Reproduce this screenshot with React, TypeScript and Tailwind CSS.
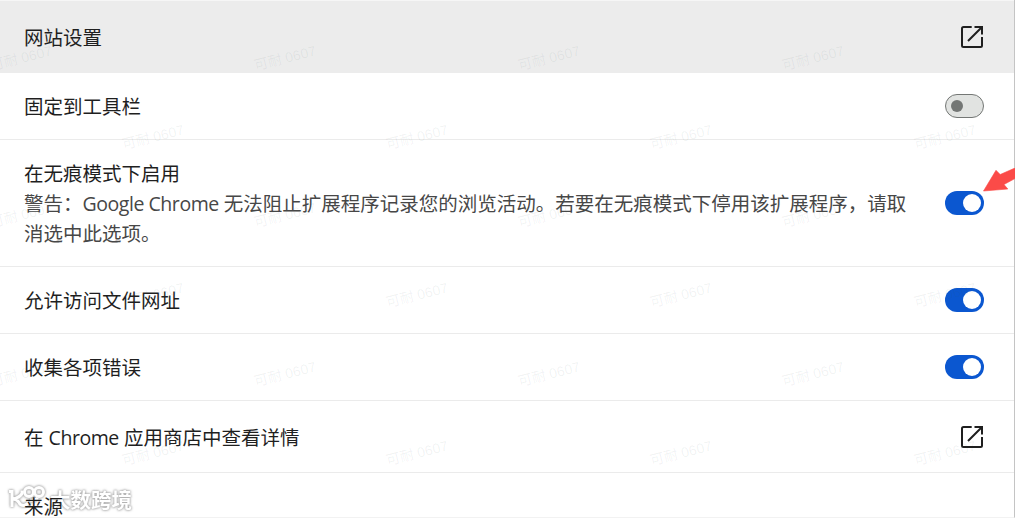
import type React from "react";

const WATERMARK_ROWS = [
  { y: 58, xs: [21, 285, 549, 813] },
  { y: 137, xs: [153, 417, 681, 945] },
  { y: 215, xs: [21, 285, 549, 813] },
  { y: 295, xs: [153, 417, 681, 945] },
  { y: 374, xs: [21, 285, 549, 813] },
  { y: 453, xs: [153, 417, 681, 945] },
];

export default function App() {
  return (
    <div className="relative h-[518px] w-[1015px] overflow-hidden bg-white font-['Open_Sans','Noto_Sans_CJK_SC',sans-serif] text-[19.5px] leading-[30px] text-[#1f1f1f]">
      <Brand />
      <div className="relative flex h-[518px] flex-col overflow-hidden border-r border-b border-r-[#c4c4c4] border-b-[#f2f2f2]">
        <div className="flex h-[73px] shrink-0 items-center justify-between border-t border-[#f6f6f6] bg-[#ececec] pl-6 pr-[31px]">
          <p className="pt-[2px]">网站设置</p>
          <OpenIcon />
        </div>
        <Row className="h-[67px] pr-[30px]" label="固定到工具栏">
          <Toggle on={false} />
        </Row>
        <Row
          className="h-[127px] pr-[30px]"
          label="在无痕模式下启用"
          detail={
            <>
              警告：<Latin>Google Chrome</Latin> 无法阻止扩展程序记录您的浏览活动。若要在无痕模式下停用该扩展程序，请取消选中此选项。
            </>
          }
        >
          <Toggle on />
        </Row>
        <Row className="h-[67px] pr-[30px]" label="允许访问文件网址">
          <Toggle on />
        </Row>
        <Row className="h-[67px] pr-[30px]" label="收集各项错误">
          <Toggle on />
        </Row>
        <Row
          className="h-[72px] pr-[31px]"
          label={
            <>
              在 <Latin>Chrome</Latin> 应用商店中查看详情
            </>
          }
        >
          <OpenIcon />
        </Row>
        <p className="shrink-0 pl-6 pt-[19px]">来源</p>
      </div>

      <Watermarks />
      <Arrow />
    </div>
  );
}

interface RowProps {
  label: React.ReactNode;
  detail?: React.ReactNode;
  className: string;
  children: React.ReactNode;
}

function Row({ label, detail, className, children }: RowProps) {
  return (
    <div className={`flex shrink-0 items-center justify-between border-b border-[#ebebeb] pl-6 ${className}`}>
      <div className="w-[890px] pt-[2px]">
        <p>{label}</p>
        {detail && <p className="text-[#474747]">{detail}</p>}
      </div>
      {children}
    </div>
  );
}

function Latin({ children }: { children: React.ReactNode }) {
  return <span className="tracking-[-0.45px]">{children}</span>;
}

function Toggle({ on }: { on: boolean }) {
  return on ? (
    <span className="flex h-6 w-[39px] shrink-0 items-center justify-end rounded-full bg-[#0b57d0] pr-[3px]">
      <span className="size-[18px] rounded-full bg-white" />
    </span>
  ) : (
    <span className="flex h-6 w-[39px] shrink-0 items-center rounded-full border border-[#747775] bg-[#e1e3e1] pl-[5px]">
      <span className="size-3 rounded-full bg-[#747775]" />
    </span>
  );
}

function OpenIcon() {
  return (
    <svg className="size-[22px] shrink-0" viewBox="0 0 22 22" fill="none" stroke="#1f1f1f" strokeWidth="2">
      <path d="M10.700 1H2.500Q1 1 1 2.500v17Q1 21 2.500 21h17q1.500 0 1.500-1.500V11" />
      <path d="M13.500 1H21v7.500M20.500 1.500 7 15" />
    </svg>
  );
}

function Watermarks() {
  return (
    <div className="pointer-events-none absolute inset-0 overflow-hidden">
      {WATERMARK_ROWS.map((row) =>
        row.xs.map((x) => (
          <span
            key={`${x}-${row.y}`}
            className="absolute -translate-x-1/2 -translate-y-1/2 -rotate-[14deg] whitespace-nowrap font-['Liberation_Sans','Noto_Sans_CJK_SC',sans-serif] text-[14px] leading-none text-[#3a5a50]/7"
            style={{ left: x, top: row.y }}
          >
            可耐 0607
          </span>
        )),
      )}
    </div>
  );
}

function Arrow() {
  return (
    <svg className="absolute right-0 top-[168px] h-6 w-8" viewBox="0 0 32 24" fill="#fb4b48">
      <path d="M.5 23 13 2.300l4.200 4.200L32 0v10.500L21 16.500l3.800 4.500Z" stroke="#fb4b48" strokeWidth=".6" strokeLinejoin="round" />
    </svg>
  );
}

function Brand() {
  return (
    <div className="absolute left-2 top-[486px] flex items-start gap-[4px] text-white [filter:drop-shadow(0_0_1px_#aaa)_drop-shadow(0_0_1px_#bbb)]">
      <svg className="h-[26px] w-[38px]" viewBox="0 0 38 26" fill="none" stroke="white" strokeWidth="3">
        <path d="M1 5.500h3v15.500M14 4.500v3q-2 4-9 5.500 4 0 6 3.500 1 3 5 3 4-1 5-4" />
        <circle cx="21" cy="6" r="4.500" />
        <circle cx="31" cy="6" r="4.500" />
        <path d="M22 14q5 1 8-2" />
      </svg>
      <span className="text-[20.5px] font-bold leading-[28px]">大数跨境</span>
    </div>
  );
}
